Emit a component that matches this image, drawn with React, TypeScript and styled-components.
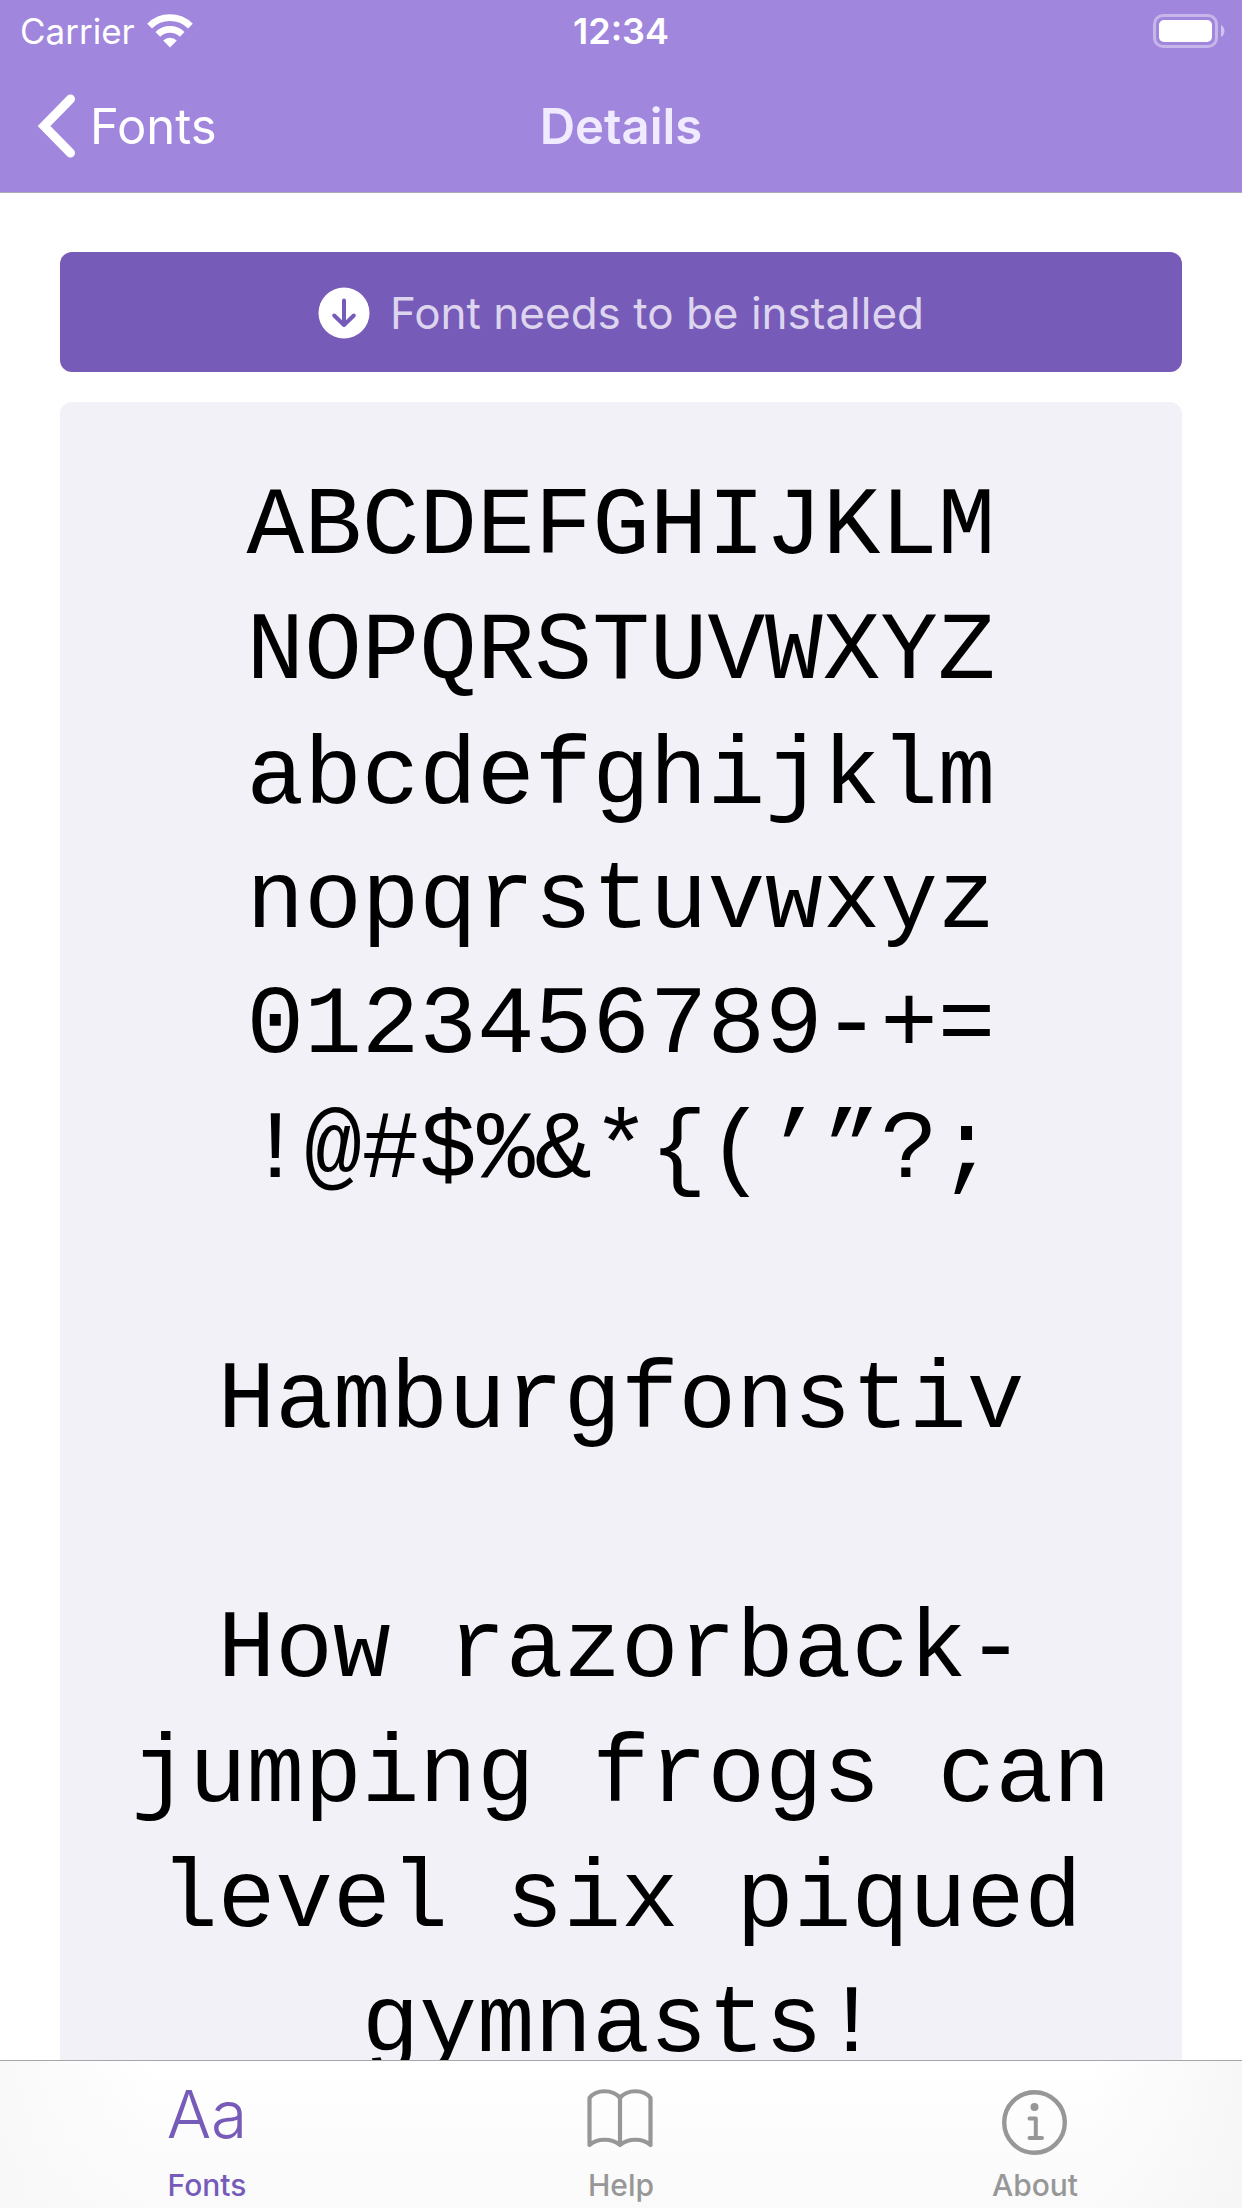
import React from "react";
import styled, { createGlobalStyle } from "styled-components";

const colors = {
  header: "#a086dd",
  accent: "#775bb9",
  panel: "#f2f1f7",
  muted: "#979797",
};

const GlobalStyle = createGlobalStyle`
  *, *::before, *::after { box-sizing: border-box; }
  body {
    margin: 0;
    background: #fff;
    font-family: Inter, "Liberation Sans", sans-serif;
  }
`;

const Screen = styled.div`
  display: flex;
  flex-direction: column;
  height: 100vh;
`;

const Header = styled.header`
  flex: none;
  background: ${colors.header};
  color: #fff;
  border-bottom: 1px solid #b0a9b9;
`;

const StatusBar = styled.div`
  display: grid;
  grid-template-columns: 1fr auto 1fr;
  align-items: center;
  height: 60px;
  padding: 2px 16px 0;
  line-height: 58px;
`;

const Carrier = styled.div`
  display: flex;
  align-items: center;
  gap: 12px;
  padding-left: 4px;
  font-size: 35px;
`;

const Clock = styled.time`
  font-size: 36px;
  font-weight: 600;
`;

const Battery = styled.svg`
  justify-self: end;
`;

const NavBar = styled.div`
  display: grid;
  grid-template-columns: 1fr auto 1fr;
  align-items: center;
  height: 132px;
  padding: 0 36px;
`;

const BackLink = styled.a`
  display: flex;
  align-items: center;
  gap: 12px;
  color: inherit;
  font-size: 49px;
  text-decoration: none;
`;

const Title = styled.h1`
  margin: 0;
  color: #f1ebff;
  font-size: 49px;
  font-weight: 600;
`;

const Content = styled.main`
  flex: 1;
  min-height: 0;
  display: flex;
  flex-direction: column;
  gap: 30px;
  padding: 59px 60px;
  overflow-y: auto;
  scrollbar-width: none;
`;

const InstallButton = styled.button`
  flex: none;
  display: flex;
  align-items: center;
  justify-content: center;
  gap: 20px;
  height: 120px;
  padding: 2px 24px 0;
  border: 0;
  border-radius: 12px;
  background: ${colors.accent};
  color: #ddd5ee;
  font-family: inherit;
  font-size: 44px;
`;

const Specimen = styled.section`
  flex: none;
  padding: 64px 60px;
  border-radius: 12px;
  background: ${colors.panel};
  color: #000;
  font-family: "Liberation Mono", monospace;
  font-size: 96px;
  line-height: 1.3;
  text-align: center;
`;

const Sample = styled.p`
  margin: 0;
  white-space: pre-line;

  & + & {
    margin-top: 1.3em;
  }
`;

const TabBar = styled.nav`
  flex: none;
  display: grid;
  grid-template-columns: repeat(3, 1fr);
  height: 148px;
  border-top: 1px solid #a6a6a6;
  background: linear-gradient(90deg, #f7f7f7cc, #ffffff00 12%, #ffffff00 88%, #f5f5f5cc),
    linear-gradient(#fff, #fafafa);
`;

const Tab = styled.a<{ $active?: boolean }>`
  display: flex;
  flex-direction: column;
  align-items: center;
  padding-top: 27px;
  color: ${(p) => (p.$active ? colors.accent : colors.muted)};
  font-size: 30px;
  font-weight: 500;
  line-height: 36px;
  text-decoration: none;
`;

const TabIcon = styled.span`
  display: flex;
  justify-content: center;
  height: 71px;
  margin-bottom: 8px;
`;

const LetterIcon = styled.span`
  font-size: 66px;
  font-weight: 300;
  line-height: 52px;
`;

const glyphRows = [
  "ABCDEFGHIJKLM",
  "NOPQRSTUVWXYZ",
  "abcdefghijklm",
  "nopqrstuvwxyz",
  "0123456789-+=",
  "!@#$%&*{(’”?;",
];

function WifiIcon() {
  return (
    <svg width="46" height="34" viewBox="0 0 46 34" fill="none" aria-hidden="true">
      <path d="M2.6 12.1 A29 29 0 0 1 43.4 12.1" stroke="#fff" strokeWidth="6.8" />
      <path d="M10.8 20.4 A17.4 17.4 0 0 1 35.2 20.4" stroke="#fff" strokeWidth="6.6" />
      <path d="M23 33.4 L16.2 26.4 A10 10 0 0 1 29.8 26.4 Z" fill="#fff" />
    </svg>
  );
}

function BatteryIcon() {
  return (
    <Battery width="73" height="34" viewBox="0 0 73 34" role="img" aria-label="Battery full">
      <rect x="1.5" y="1.5" width="62" height="31" rx="8.5" fill="none" stroke="#fff" strokeOpacity="0.4" strokeWidth="3" />
      <rect x="6" y="6" width="53" height="22" rx="5" fill="#fff" />
      <path d="M68 11 C72.6 13 72.6 21 68 23 Z" fill="#fff" fillOpacity="0.5" />
    </Battery>
  );
}

function BackIcon() {
  return (
    <svg width="42" height="66" viewBox="0 0 42 66" fill="none" aria-hidden="true">
      <path d="M34.5 6 L8 33 L34.5 60" stroke="#fff" strokeWidth="9" strokeLinecap="round" />
    </svg>
  );
}

function DownloadIcon() {
  return (
    <svg width="52" height="52" viewBox="0 0 52 52" fill="none" aria-hidden="true">
      <circle cx="26" cy="26" r="25.5" fill="#fff" />
      <path
        d="M26 13.5 V37.5 M16.2 28.5 L26 38 L35.8 28.5"
        stroke={colors.accent}
        strokeWidth="4"
        strokeLinecap="round"
        strokeLinejoin="round"
      />
    </svg>
  );
}

function BookIcon() {
  return (
    <svg width="68" height="60" viewBox="0 0 68 60" fill="none" aria-hidden="true">
      <path
        d="M33 10 C26 1 9 1 2.5 10 V57 C10 50 25 50 33 57 C41 50 56 50 63.5 57 V10 C57 1 40 1 33 10 V57"
        stroke="currentColor"
        strokeWidth="4.2"
        strokeLinecap="round"
        strokeLinejoin="round"
      />
    </svg>
  );
}

function InfoIcon() {
  return (
    <svg width="68" height="68" viewBox="0 0 68 68" fill="none" aria-hidden="true">
      <circle cx="33.5" cy="34.5" r="30.3" stroke="currentColor" strokeWidth="4.4" />
      <circle cx="33.5" cy="19" r="4" fill="currentColor" />
      <path
        d="M28.5 30.5 H34.8 V50 M28.5 50 H41"
        stroke="currentColor"
        strokeWidth="4"
        strokeLinecap="round"
        strokeLinejoin="round"
      />
    </svg>
  );
}

export default function App() {
  return (
    <>
      <GlobalStyle />
      <Screen>
        <Header>
          <StatusBar>
            <Carrier>
              <span>Carrier</span>
              <WifiIcon />
            </Carrier>
            <Clock>12:34</Clock>
            <BatteryIcon />
          </StatusBar>
          <NavBar>
            <BackLink href="#fonts">
              <BackIcon />
              <span>Fonts</span>
            </BackLink>
            <Title>Details</Title>
          </NavBar>
        </Header>
        <Content>
          <InstallButton type="button">
            <DownloadIcon />
            <span>Font needs to be installed</span>
          </InstallButton>
          <Specimen>
            <Sample>{glyphRows.join("\n")}</Sample>
            <Sample>Hamburgfonstiv</Sample>
            <Sample>How razorback-jumping frogs can level six piqued gymnasts!</Sample>
          </Specimen>
        </Content>
        <TabBar>
          <Tab href="#fonts" $active aria-current="page">
            <TabIcon>
              <LetterIcon aria-hidden="true">Aa</LetterIcon>
            </TabIcon>
            Fonts
          </Tab>
          <Tab href="#help">
            <TabIcon>
              <BookIcon />
            </TabIcon>
            Help
          </Tab>
          <Tab href="#about">
            <TabIcon>
              <InfoIcon />
            </TabIcon>
            About
          </Tab>
        </TabBar>
      </Screen>
    </>
  );
}
